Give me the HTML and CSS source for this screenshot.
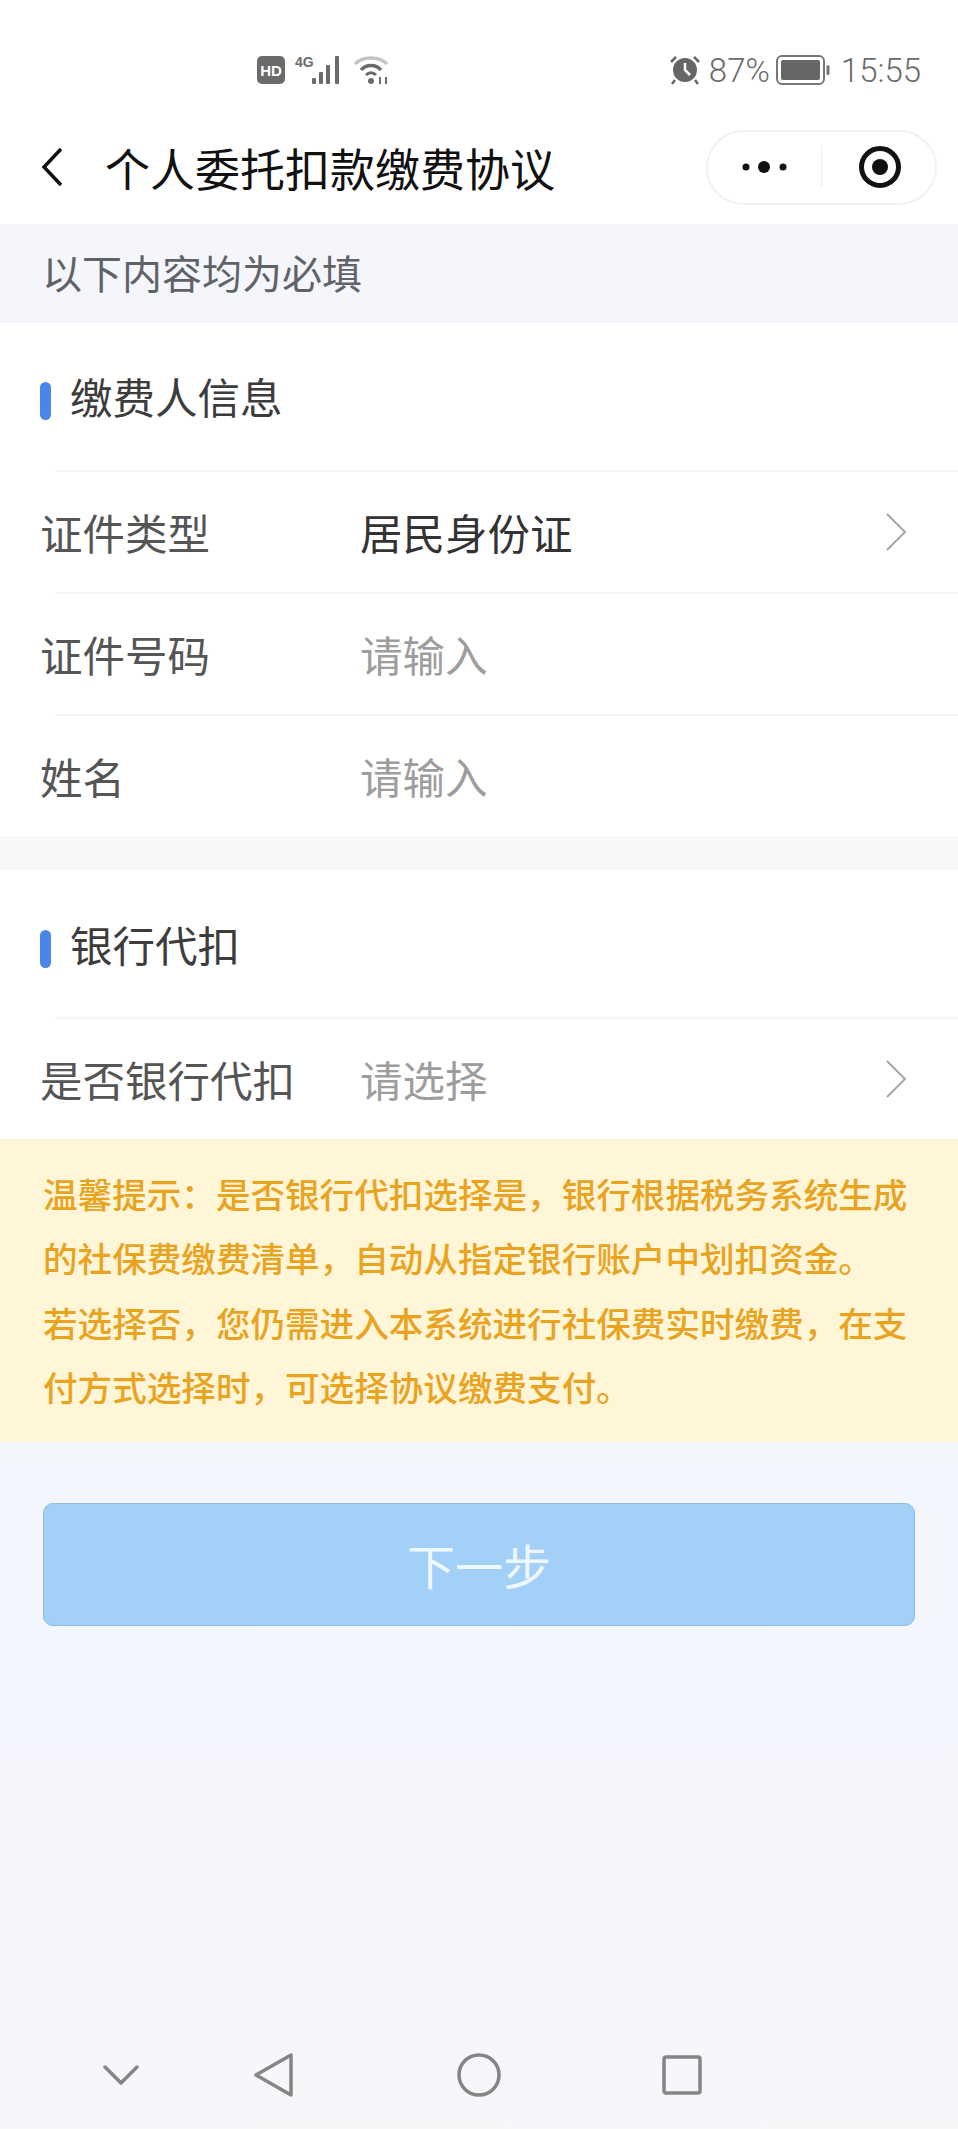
FILE: index.html
```html
<!DOCTYPE html>
<html>
<head>
    <title>个人委托扣款缴费协议</title>
    <link rel="stylesheet" href="styles.css">
</head>
<body>
    <div class="page">
        <div class="status-bar">
            <div class="status-left">
                <svg width="28" height="28" viewBox="0 0 28 28">
                    <rect width="28" height="28" rx="5" fill="#6b6b6b"/>
                    <text x="14" y="20" text-anchor="middle" class="hd-text">HD</text>
                </svg>
                <svg width="48" height="30" viewBox="0 0 48 30">
                    <text x="0" y="12" class="net-text">4G</text>
                    <g fill="#6b6b6b">
                        <rect x="17" y="23" width="4" height="6" rx="1"/>
                        <rect x="24" y="17" width="4" height="12" rx="1"/>
                        <rect x="31" y="10" width="4" height="19" rx="1"/>
                        <rect x="40" y="1" width="4" height="28" rx="1"/>
                    </g>
                </svg>
                <svg class="wifi" width="36" height="30" viewBox="0 0 36 30" fill="none">
                    <path d="M1 9C9 1 25 1 33 9" stroke="#c4c4c4" stroke-width="3.5"/>
                    <path d="M7 15C12 9 22 9 27 15" stroke="#6b6b6b" stroke-width="3.5"/>
                    <path d="M12 20C15 17 19 17 22 20" stroke="#6b6b6b" stroke-width="3"/>
                    <circle cx="17" cy="26" r="3" fill="#6b6b6b"/>
                    <path d="M26 22V29M32 22V29" stroke="#6b6b6b" stroke-width="2"/>
                </svg>
            </div>
            <div class="status-right">
                <svg width="32" height="30" viewBox="0 0 32 30" fill="none">
                    <circle cx="16" cy="15" r="12" fill="#666"/>
                    <path d="M16 8V15L21 20" stroke="#fff" stroke-width="2.5"/>
                    <path d="M2 7L7 2M30 7L25 2M6 25L3 29M26 25L29 29" stroke="#666" stroke-width="2.5"/>
                </svg>
                <span class="percent">87%</span>
                <svg width="54" height="30" viewBox="0 0 54 30">
                    <rect x="1" y="1" width="47" height="28" rx="5" fill="none" stroke="#777" stroke-width="2"/>
                    <rect x="5" y="5" width="39" height="20" rx="2" fill="#666"/>
                    <rect x="50.5" y="10" width="3" height="10" rx="1.5" fill="#777"/>
                </svg>
                <span class="clock">15:55</span>
            </div>
        </div>

        <div class="nav-bar">
            <svg class="back" width="22" height="40" viewBox="0 0 22 40" fill="none">
                <path d="M20 2L3 20L20 38" stroke="#111" stroke-width="3.5"/>
            </svg>
            <div class="nav-title">个人委托扣款缴费协议</div>
            <div class="capsule">
                <div class="capsule-side">
                    <svg width="46" height="14" viewBox="0 0 46 14" fill="#111">
                        <circle cx="4" cy="7" r="3.5"/>
                        <circle cx="22" cy="7" r="6"/>
                        <circle cx="41" cy="7" r="3.5"/>
                    </svg>
                </div>
                <div class="capsule-line"></div>
                <div class="capsule-side">
                    <svg class="target" width="44" height="44" viewBox="0 0 44 44">
                        <circle cx="22" cy="22" r="18.5" fill="none" stroke="#111" stroke-width="5"/>
                        <circle cx="22" cy="22" r="8" fill="#111"/>
                    </svg>
                </div>
            </div>
        </div>

        <div class="required-tip">以下内容均为必填</div>

        <div class="section">
            <div class="section-head"><span class="mark"></span>缴费人信息</div>
            <div class="row">
                <div class="label">证件类型</div>
                <div class="value">居民身份证</div>
                <svg class="arrow" width="22" height="40" viewBox="0 0 22 40" fill="none">
                    <path d="M2 2L20 20L2 38" stroke="#a6a6a6" stroke-width="2"/>
                </svg>
            </div>
            <div class="row">
                <div class="label">证件号码</div>
                <div class="value placeholder">请输入</div>
            </div>
            <div class="row">
                <div class="label">姓名</div>
                <div class="value placeholder">请输入</div>
            </div>
        </div>

        <div class="section second">
            <div class="section-head"><span class="mark"></span>银行代扣</div>
            <div class="row">
                <div class="label">是否银行代扣</div>
                <div class="value placeholder">请选择</div>
                <svg class="arrow" width="22" height="40" viewBox="0 0 22 40" fill="none">
                    <path d="M2 2L20 20L2 38" stroke="#a6a6a6" stroke-width="2"/>
                </svg>
            </div>
        </div>

        <div class="warm-tip">
            <p>温馨提示：是否银行代扣选择是，银行根据税务系统生成的社保费缴费清单，自动从指定银行账户中划扣资金。</p>
            <p>若选择否，您仍需进入本系统进行社保费实时缴费，在支付方式选择时，可选择协议缴费支付。</p>
        </div>

        <button class="next-btn">下一步</button>

        <div class="bottom-nav">
            <svg class="nav-down" width="36" height="20" viewBox="0 0 36 20" fill="none">
                <path d="M2 2L18 18L34 2" stroke="#858585" stroke-width="3.5" stroke-linecap="round" stroke-linejoin="round"/>
            </svg>
            <svg class="nav-back" width="40" height="44" viewBox="0 0 40 44" fill="none">
                <path d="M37 2V42L2 22Z" stroke="#858585" stroke-width="3.5" stroke-linejoin="round"/>
            </svg>
            <svg class="nav-home" width="44" height="44" viewBox="0 0 44 44" fill="none">
                <circle cx="22" cy="22" r="20" stroke="#858585" stroke-width="3.5"/>
            </svg>
            <svg class="nav-recent" width="40" height="40" viewBox="0 0 40 40" fill="none">
                <rect x="2" y="2" width="36" height="36" rx="2" stroke="#858585" stroke-width="3.5"/>
            </svg>
        </div>
    </div>
</body>
</html>
```

FILE: styles.css
```css
body {
    margin: 0;
    background-color: #f4f6fe;
    font-family: "Noto Sans CJK SC", "Liberation Sans", sans-serif;
}
.page {
    display: flex;
    flex-direction: column;
    height: 2129px;
    overflow: hidden;
    background: linear-gradient(#f4f6fe 75%, #f6f7f9);
}
.status-bar {
    display: flex;
    justify-content: space-between;
    align-items: center;
    height: 110px;
    padding: 30px 37px 0 257px;
    box-sizing: border-box;
    background-color: #fff;
    color: #6b6b6b;
    font-family: Roboto, "Liberation Sans", sans-serif;
}
.status-left, .status-right {
    display: flex;
    align-items: center;
}
.status-left svg {
    margin-right: 8px;
}
.status-left svg:first-child {
    margin-right: 10px;
}
.status-left .wifi {
    margin: 0 0 0 3px;
}
.hd-text {
    font: bold 15px "Liberation Sans", sans-serif;
    fill: #fff;
}
.net-text {
    font: bold 14px "Liberation Sans", sans-serif;
    fill: #6b6b6b;
}
.percent {
    font-size: 33px;
    font-weight: 300;
    margin: 0 6px 0 8px;
}
.clock {
    font-size: 33px;
    font-weight: 300;
    margin-left: 11px;
}
.nav-bar {
    display: flex;
    align-items: center;
    height: 114px;
    padding: 0 21px 0 41px;
    background-color: #fff;
}
.nav-title {
    margin-left: 42px;
    font-size: 45px;
    color: #111;
}
.capsule {
    display: flex;
    align-items: center;
    margin-left: auto;
    width: 231px;
    height: 75px;
    box-sizing: border-box;
    border: 2px solid #f1f1f1;
    border-radius: 38px;
}
.capsule-side {
    flex: 1;
    display: flex;
    justify-content: center;
}
.capsule-line {
    width: 1px;
    height: 42px;
    background-color: #eeeeee;
}
.target {
    margin-left: 3px;
}
.required-tip {
    height: 99px;
    padding-left: 42px;
    line-height: 97px;
    font-size: 40px;
    color: #5f6368;
    background-color: #f5f6fb;
}
.section {
    background-color: #fff;
}
.second {
    border-top: 34px solid #f7f7f8;
}
.section-head {
    display: flex;
    align-items: center;
    height: 147px;
    padding: 0 0 3px 40px;
    box-sizing: border-box;
    font-size: 42.5px;
    color: #3c3c3c;
}
.second .section-head {
    padding-bottom: 1px;
}
.mark {
    width: 11px;
    height: 38px;
    margin: 12px 19px 0 0;
    border-radius: 6px;
    background-color: #4a86ea;
}
.row {
    position: relative;
    display: flex;
    align-items: center;
    height: 122px;
    font-size: 42.5px;
}
.row::before {
    content: "";
    position: absolute;
    top: 0;
    left: 55px;
    right: 0;
    height: 2px;
    background-color: #f5f5f5;
}
.label {
    width: 320px;
    margin-left: 40px;
    color: #555;
}
.value {
    flex: 1;
    color: #333;
}
.placeholder {
    color: #9d9d9d;
}
.arrow {
    margin: 2px 51px 0 0;
}
.warm-tip {
    padding: 22px 43px 23px;
    background-color: #fff6d8;
    font-size: 34.6px;
    font-weight: 500;
    line-height: 64.4px;
    color: #eaa31f;
}
.warm-tip p {
    margin: 0;
}
.next-btn {
    display: block;
    width: 872px;
    height: 123px;
    margin: 61px 0 0 43px;
    padding: 0;
    border: 1px solid #8dbce6;
    border-radius: 10px;
    background-color: #a3d0f7;
    color: #eef6fe;
    font-family: inherit;
    font-size: 48px;
}
.bottom-nav {
    display: flex;
    align-items: center;
    margin-top: auto;
    height: 44px;
    padding: 0 0 32px 103px;
}
.nav-back {
    margin-left: 115px;
}
.nav-home {
    margin-left: 163px;
}
.nav-recent {
    margin-left: 161px;
}
```
